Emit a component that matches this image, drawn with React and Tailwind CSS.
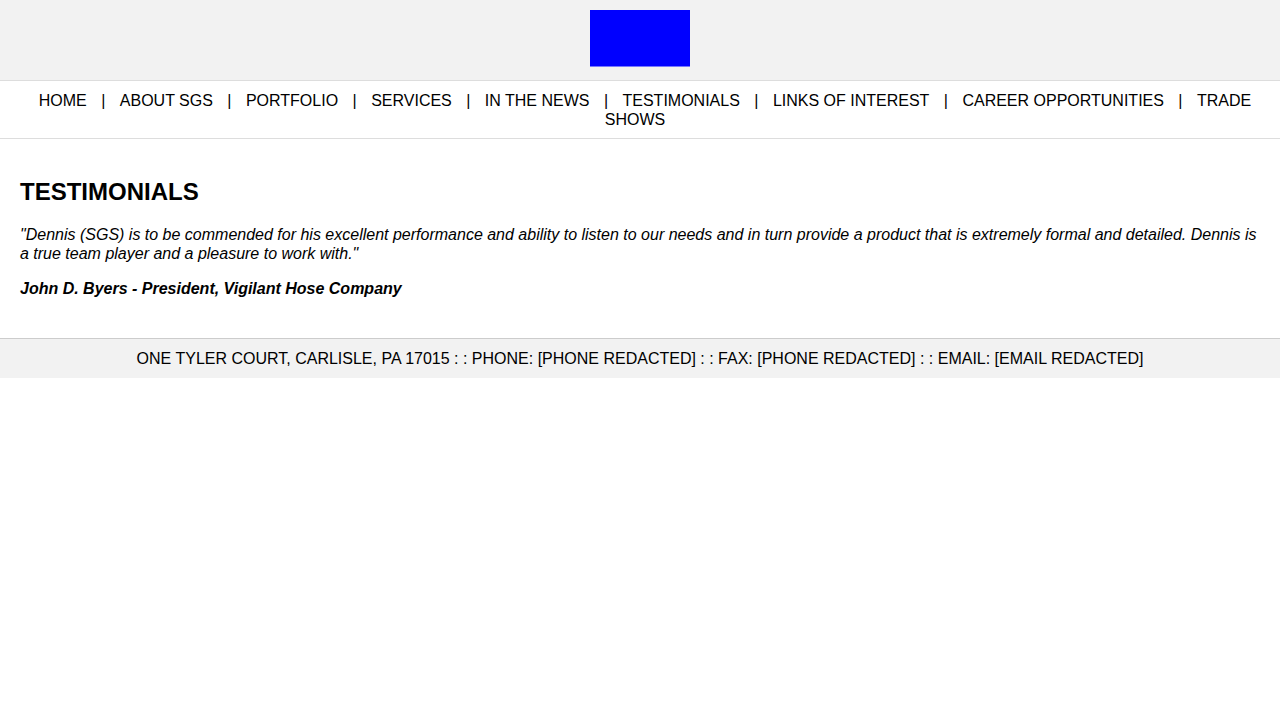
const links = [
  'HOME',
  'ABOUT SGS',
  'PORTFOLIO',
  'SERVICES',
  'IN THE NEWS',
  'TESTIMONIALS',
  'LINKS OF INTEREST',
  'CAREER OPPORTUNITIES',
  'TRADE SHOWS',
]

export default function App() {
  return (
    <div className="min-h-[720px] bg-white text-black font-['Liberation_Sans',Arial,sans-serif] text-[16px] leading-[19px]">
      <header className="h-[81px] bg-[#f2f2f2] border-b border-[#dddddd] flex justify-center pt-[10px]">
        <div className="w-[100px] h-[57px] bg-[#0000ff] border-b border-[#7777ff]" />
      </header>

      <nav className="border-b border-[#dddddd] pt-[10px] pb-[9px] px-[20px] text-center">
        {links.map((l, i) => (
          <span key={l}>
            <a href="#" className="px-[10px] text-black">{l}</a>
            {i < links.length - 1 ? ' | ' : ''}
          </span>
        ))}
      </nav>

      <main className="p-[20px]">
        <h2 className="text-[24px] leading-[normal] font-bold mt-[19px] mb-[19px]">TESTIMONIALS</h2>
        <p className="italic mb-[16px]">
          "Dennis (SGS) is to be commended for his excellent performance and ability to listen to our needs and in turn provide a product that is extremely formal and detailed. Dennis is a true team player and a pleasure to work with."
        </p>
        <p className="italic font-bold mb-[20px]">John D. Byers - President, Vigilant Hose Company</p>
      </main>

      <footer className="bg-[#f2f2f2] border-t border-[#cccccc] py-[10px] text-center">
        ONE TYLER COURT, CARLISLE, PA 17015 : : PHONE: [PHONE REDACTED] : : FAX: [PHONE REDACTED] : : EMAIL: [EMAIL REDACTED]
      </footer>
    </div>
  )
}
